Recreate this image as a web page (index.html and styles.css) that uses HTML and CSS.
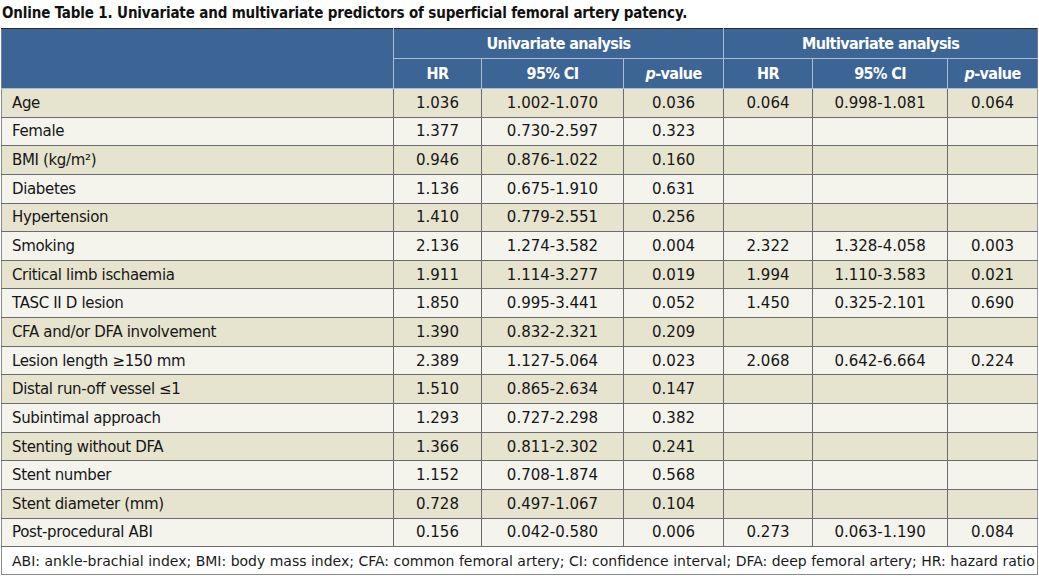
FILE: index.html
```html
<!DOCTYPE html>
<html>
<head>
<meta charset="utf-8">
<link rel="stylesheet" href="styles.css">
</head>
<body>
<h1 class="title">Online Table 1. Univariate and multivariate predictors of superficial femoral artery patency.</h1>
<table class="data">
  <colgroup>
    <col class="c-label">
    <col class="c-hr1">
    <col class="c-ci1">
    <col class="c-p1">
    <col class="c-hr2">
    <col class="c-ci2">
    <col class="c-p2">
  </colgroup>
  <thead>
    <tr class="h1">
      <th rowspan="2" class="blank"></th>
      <th colspan="3">Univariate analysis</th>
      <th colspan="3">Multivariate analysis</th>
    </tr>
    <tr class="h2">
      <th>HR</th><th>95% CI</th><th><i>p</i>-value</th>
      <th>HR</th><th>95% CI</th><th><i>p</i>-value</th>
    </tr>
  </thead>
  <tbody>
    <tr class="odd"><td>Age</td><td>1.036</td><td>1.002-1.070</td><td>0.036</td><td>0.064</td><td>0.998-1.081</td><td>0.064</td></tr>
    <tr class="even"><td>Female</td><td>1.377</td><td>0.730-2.597</td><td>0.323</td><td></td><td></td><td></td></tr>
    <tr class="odd"><td>BMI (kg/m²)</td><td>0.946</td><td>0.876-1.022</td><td>0.160</td><td></td><td></td><td></td></tr>
    <tr class="even"><td>Diabetes</td><td>1.136</td><td>0.675-1.910</td><td>0.631</td><td></td><td></td><td></td></tr>
    <tr class="odd"><td>Hypertension</td><td>1.410</td><td>0.779-2.551</td><td>0.256</td><td></td><td></td><td></td></tr>
    <tr class="even"><td>Smoking</td><td>2.136</td><td>1.274-3.582</td><td>0.004</td><td>2.322</td><td>1.328-4.058</td><td>0.003</td></tr>
    <tr class="odd"><td>Critical limb ischaemia</td><td>1.911</td><td>1.114-3.277</td><td>0.019</td><td>1.994</td><td>1.110-3.583</td><td>0.021</td></tr>
    <tr class="even"><td>TASC II D lesion</td><td>1.850</td><td>0.995-3.441</td><td>0.052</td><td>1.450</td><td>0.325-2.101</td><td>0.690</td></tr>
    <tr class="odd"><td>CFA and/or DFA involvement</td><td>1.390</td><td>0.832-2.321</td><td>0.209</td><td></td><td></td><td></td></tr>
    <tr class="even"><td>Lesion length ≥150 mm</td><td>2.389</td><td>1.127-5.064</td><td>0.023</td><td>2.068</td><td>0.642-6.664</td><td>0.224</td></tr>
    <tr class="odd"><td>Distal run-off vessel ≤1</td><td>1.510</td><td>0.865-2.634</td><td>0.147</td><td></td><td></td><td></td></tr>
    <tr class="even"><td>Subintimal approach</td><td>1.293</td><td>0.727-2.298</td><td>0.382</td><td></td><td></td><td></td></tr>
    <tr class="odd"><td>Stenting without DFA</td><td>1.366</td><td>0.811-2.302</td><td>0.241</td><td></td><td></td><td></td></tr>
    <tr class="even"><td>Stent number</td><td>1.152</td><td>0.708-1.874</td><td>0.568</td><td></td><td></td><td></td></tr>
    <tr class="odd"><td>Stent diameter (mm)</td><td>0.728</td><td>0.497-1.067</td><td>0.104</td><td></td><td></td><td></td></tr>
    <tr class="even"><td>Post-procedural ABI</td><td>0.156</td><td>0.042-0.580</td><td>0.006</td><td>0.273</td><td>0.063-1.190</td><td>0.084</td></tr>
  </tbody>
  <tfoot>
    <tr class="foot"><td colspan="7">ABI: ankle-brachial index; BMI: body mass index; CFA: common femoral artery; CI: confidence interval; DFA: deep femoral artery; HR: hazard ratio</td></tr>
  </tfoot>
</table>
</body>
</html>
```
FILE: styles.css
```css
html, body {
  margin: 0;
  padding: 0;
  background: #ffffff;
}
.title {
  margin: 0;
  padding: 4px 0 0 2px;
  height: 28px;
  box-sizing: border-box;
  font-family: "DejaVu Sans Condensed", "DejaVu Sans", sans-serif;
  font-stretch: condensed;
  font-weight: bold;
  font-size: 15px;
  letter-spacing: -0.15px;
  line-height: 18px;
  color: #111;
  white-space: nowrap;
}
.data {
  margin-left: 1px;
  width: 1037px;
  table-layout: fixed;
  border-collapse: collapse;
  font-family: "DejaVu Sans", sans-serif;
  font-size: 15px;
  color: #161616;
}
.c-label { width: 392px; }
.c-hr1 { width: 88px; }
.c-ci1 { width: 142px; }
.c-p1 { width: 100px; }
.c-hr2 { width: 89px; }
.c-ci2 { width: 135px; }
.c-p2 { width: 90px; }

.data thead th {
  background: #3c6596;
  color: #ffffff;
  font-family: "DejaVu Sans Condensed", "DejaVu Sans", sans-serif;
  font-stretch: condensed;
  font-weight: bold;
  font-size: 16px;
  letter-spacing: -0.6px;
  height: 29px;
  padding: 0;
  border: 1px solid #a9bdd6;
  text-align: center;
  vertical-align: middle;
}
.data thead tr.h1 th {
  border-top: 1px solid #2b2b2b;
}
.data thead th.blank {
  border-left: 1px solid #6f7f90;
}
.data thead th:last-child {
  border-right: 1px solid #6f7f90;
}
.data thead th i {
  font-style: italic;
}
.data tbody td {
  height: 27.65px;
  padding: 0;
  border: 1px solid #6b6b6b;
  text-align: center;
  vertical-align: middle;
  line-height: 18px;
}
.data tbody td:first-child {
  text-align: left;
  padding-left: 10px;
  letter-spacing: -0.35px;
  border-left: 1px solid #8a8a8a;
}
.data tbody td:last-child {
  border-right: 1px solid #9a9a9a;
}
.data tbody tr.odd td {
  background: #e6e3ce;
}
.data tbody tr.even td {
  background: #f4f3ec;
}
.data tfoot td {
  height: 27px;
  padding: 0 0 0 10px;
  background: #ffffff;
  border: 1px solid #8a8a8a;
  font-size: 14px;
  color: #1a1a1a;
  vertical-align: middle;
  white-space: nowrap;
}
```
